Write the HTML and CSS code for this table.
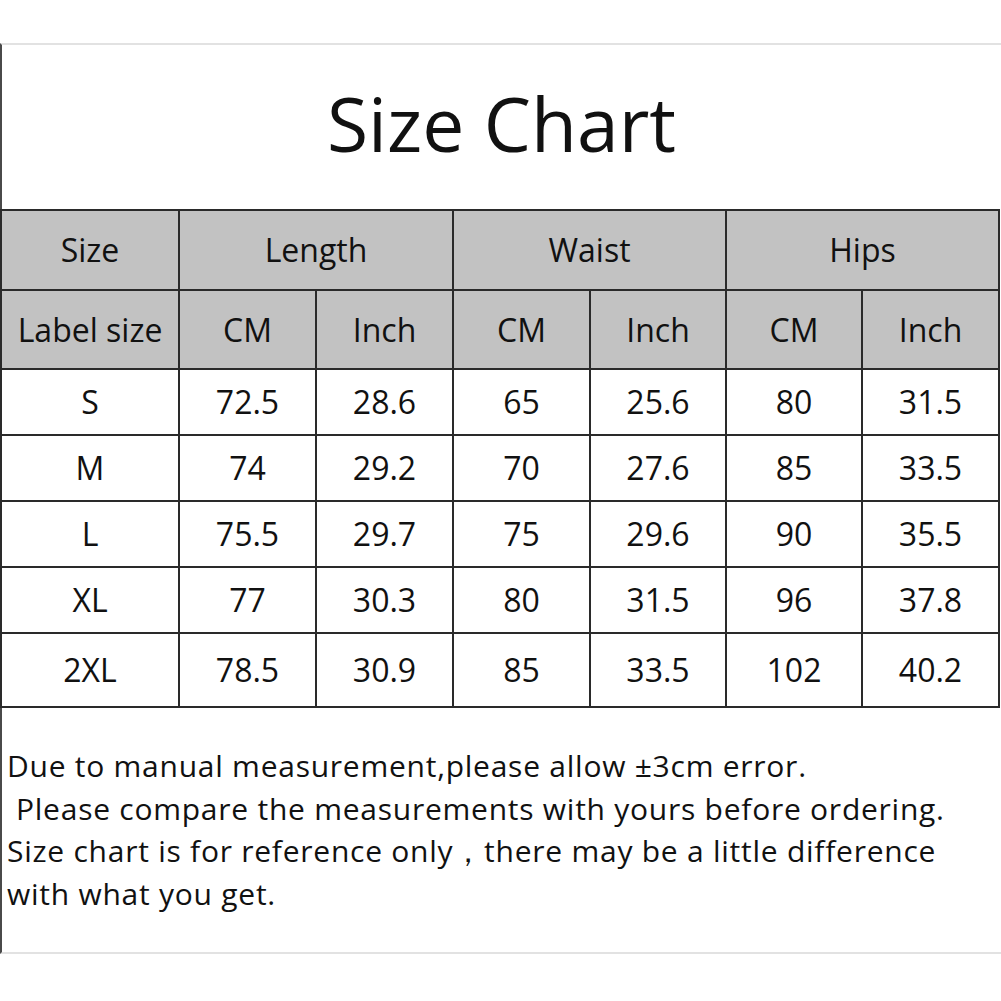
FILE: index.html
```html
<!DOCTYPE html>
<html>
<head>
<meta charset="utf-8">
<link rel="stylesheet" href="styles.css">
</head>
<body>
<div class="frame">
  <h1 class="title">Size Chart</h1>
  <table class="chart">
    <colgroup>
      <col class="c0"><col class="c1"><col class="c2"><col class="c3"><col class="c4"><col class="c5"><col class="c6">
    </colgroup>
    <thead>
      <tr class="h1">
        <th>Size</th><th colspan="2">Length</th><th colspan="2">Waist</th><th colspan="2">Hips</th>
      </tr>
      <tr class="h2">
        <th>Label size</th><th>CM</th><th>Inch</th><th>CM</th><th>Inch</th><th>CM</th><th>Inch</th>
      </tr>
    </thead>
    <tbody>
      <tr><td>S</td><td>72.5</td><td>28.6</td><td>65</td><td>25.6</td><td>80</td><td>31.5</td></tr>
      <tr><td>M</td><td>74</td><td>29.2</td><td>70</td><td>27.6</td><td>85</td><td>33.5</td></tr>
      <tr><td>L</td><td>75.5</td><td>29.7</td><td>75</td><td>29.6</td><td>90</td><td>35.5</td></tr>
      <tr><td>XL</td><td>77</td><td>30.3</td><td>80</td><td>31.5</td><td>96</td><td>37.8</td></tr>
      <tr class="last"><td>2XL</td><td>78.5</td><td>30.9</td><td>85</td><td>33.5</td><td>102</td><td>40.2</td></tr>
    </tbody>
  </table>
  <div class="notes">
    <p>Due to manual measurement,please allow ±3cm error.</p>
    <p class="indent">Please compare the measurements with yours before ordering.</p>
    <p>Size chart is for reference only，there may be a little difference</p>
    <p>with what you get.</p>
  </div>
</div>
</body>
</html>
```
FILE: styles.css
```css
html, body {
  margin: 0;
  padding: 0;
  background: #ffffff;
}
body {
  font-family: "Open Sans", "Noto Sans", sans-serif;
  color: #111;
}
.frame {
  margin-top: 43px;
  height: 911px;
  border-top: 2px solid #e2e2e2;
  border-bottom: 2px solid #e2e2e2;
  border-left: 2px solid #4a4a4a;
  box-sizing: border-box;
}
.title {
  margin: 0;
  height: 164px;
  display: flex;
  align-items: center;
  justify-content: center;
  font-weight: 400;
  font-size: 75px;
  color: #111;
  padding-bottom: 8px;
  box-sizing: border-box;
}
.chart {
  border-collapse: collapse;
  width: 999px;
  margin-left: -2px;
  table-layout: fixed;
  font-size: 32px;
  line-height: 40px;
}
.c0 { width: 178px; }
.c1, .c2, .c3, .c6 { width: 137px; }
.c4, .c5 { width: 136px; }
.chart th, .chart td {
  border: 2px solid #2a2a2a;
  text-align: center;
  padding: 0;
  font-weight: 400;
  color: #111;
}
.chart th {
  background: #c2c2c2;
}
.h1 th { height: 78px; }
.h2 th { height: 77px; }
.chart td { height: 64px; }
.chart .last td { height: 72px; }
.notes {
  padding-top: 37px;
  padding-left: 5px;
  font-size: 30px;
  letter-spacing: 0.75px;
  line-height: 42.5px;
}
.notes p {
  margin: 0;
  white-space: nowrap;
}
.notes .indent {
  padding-left: 9px;
}
```
